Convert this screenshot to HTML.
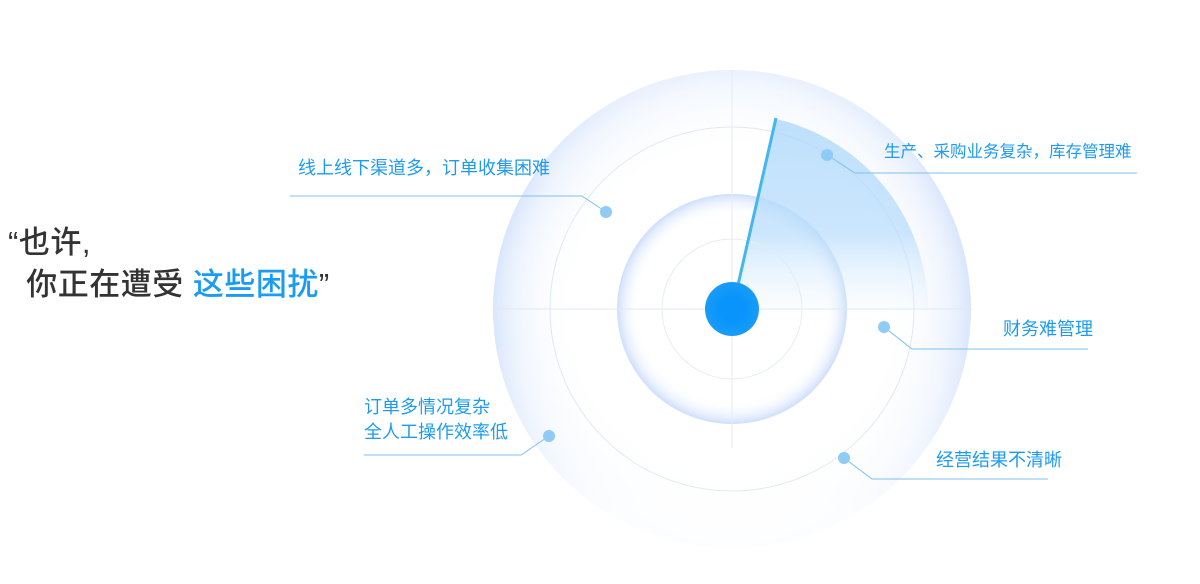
<!DOCTYPE html>
<html><head><meta charset="utf-8"><style>
body{margin:0;width:1200px;height:584px;background:#fff;overflow:hidden;position:relative;font-family:"Liberation Sans","Noto Sans CJK SC",sans-serif}
.t{position:absolute;color:#1e9bf0;font-size:18px;white-space:nowrap;line-height:25px}
.h{position:absolute;left:8px;top:222px;font-size:31px;color:#333;line-height:42px;font-weight:500;letter-spacing:0.5px}
.h span{color:#1a9cf5}
</style></head><body>
<svg width="1200" height="584" style="position:absolute;left:0;top:0">
<defs>
<radialGradient id="outer" cx="732" cy="309" r="240" gradientUnits="userSpaceOnUse">
<stop offset="0.65" stop-color="#fff" stop-opacity="0"/>
<stop offset="0.92" stop-color="#e8f0fd" stop-opacity="0.8"/>
<stop offset="1" stop-color="#d3e2fb" stop-opacity="0.9"/>
</radialGradient>
<linearGradient id="fadeB" x1="0" y1="0" x2="0" y2="1">
<stop offset="0" stop-color="#fff" stop-opacity="0.5"/>
<stop offset="0.3" stop-color="#fff" stop-opacity="0"/>
<stop offset="0.55" stop-color="#fff" stop-opacity="0"/>
<stop offset="0.9" stop-color="#fff" stop-opacity="0.9"/>
<stop offset="1" stop-color="#fff" stop-opacity="0.95"/>
</linearGradient>
<radialGradient id="inner" cx="732" cy="309" r="116" gradientUnits="userSpaceOnUse">
<stop offset="0.8" stop-color="#fff" stop-opacity="0"/>
<stop offset="0.95" stop-color="#e3ecfd"/>
<stop offset="1" stop-color="#c9dcfb"/>
</radialGradient>
<linearGradient id="wedge" x1="0" y1="118" x2="0" y2="309" gradientUnits="userSpaceOnUse">
<stop offset="0" stop-color="#a9d6fb" stop-opacity="0.75"/>
<stop offset="0.6" stop-color="#b5dbfc" stop-opacity="0.7"/>
<stop offset="1" stop-color="#d8ecfe" stop-opacity="0.1"/>
</linearGradient>
<radialGradient id="dot" cx="732" cy="309" r="27" gradientUnits="userSpaceOnUse">
<stop offset="0.45" stop-color="#0894fb"/><stop offset="1" stop-color="#1a9cf7"/>
</radialGradient>
</defs>
<circle cx="732" cy="309" r="239" fill="url(#outer)"/>
<rect x="490" y="60" width="490" height="500" fill="url(#fadeB)"/>
<circle cx="732" cy="309" r="182" fill="none" stroke="#e2e8f3" stroke-width="1"/>
<circle cx="732" cy="309" r="115" fill="#fff"/>
<circle cx="732" cy="309" r="115" fill="url(#inner)"/>
<path d="M732,309 L776,119 A196,196 0 0,1 928,309 Z" fill="url(#wedge)"/>
<circle cx="732" cy="309" r="70" fill="none" stroke="#e6ebf4"/>
<line x1="494" y1="309" x2="972" y2="309" stroke="#e0e8f6"/>
<line x1="732" y1="70" x2="732" y2="448" stroke="#e6ecf7"/>
<line x1="738" y1="285" x2="776" y2="118" stroke="#45b6ef" stroke-width="3"/>
<circle cx="732" cy="309" r="27" fill="url(#dot)"/>
<g fill="none" stroke="#7ec0f2" stroke-width="1">
<polyline points="290,196 582,196 606,212"/>
<polyline points="827,155 855,173 1137,173"/>
<polyline points="884,327 912,349 1088,349"/>
<polyline points="549,436 521,455 364,455"/>
<polyline points="844,458 872,479 1048,479"/>
</g>
<g fill="#8ecbf5">
<circle cx="606" cy="212" r="6"/><circle cx="827" cy="155" r="6"/><circle cx="884" cy="327" r="6"/><circle cx="549" cy="436" r="6"/><circle cx="844" cy="458" r="6"/>
</g>
</svg>
<div class="h">“也许,<br>&nbsp;&nbsp;你正在遭受 <span>这些困扰</span>”</div>
<div class="t" style="left:298px;top:156px">线上线下渠道多，订单收集困难</div>
<div class="t" style="left:884px;top:140px;font-size:16.5px;letter-spacing:0">生产、采购业务复杂，库存管理难</div>
<div class="t" style="left:1003px;top:317px">财务难管理</div>
<div class="t" style="left:364px;top:395px">订单多情况复杂<br>全人工操作效率低</div>
<div class="t" style="left:936px;top:448px">经营结果不清晰</div>
</body></html>
